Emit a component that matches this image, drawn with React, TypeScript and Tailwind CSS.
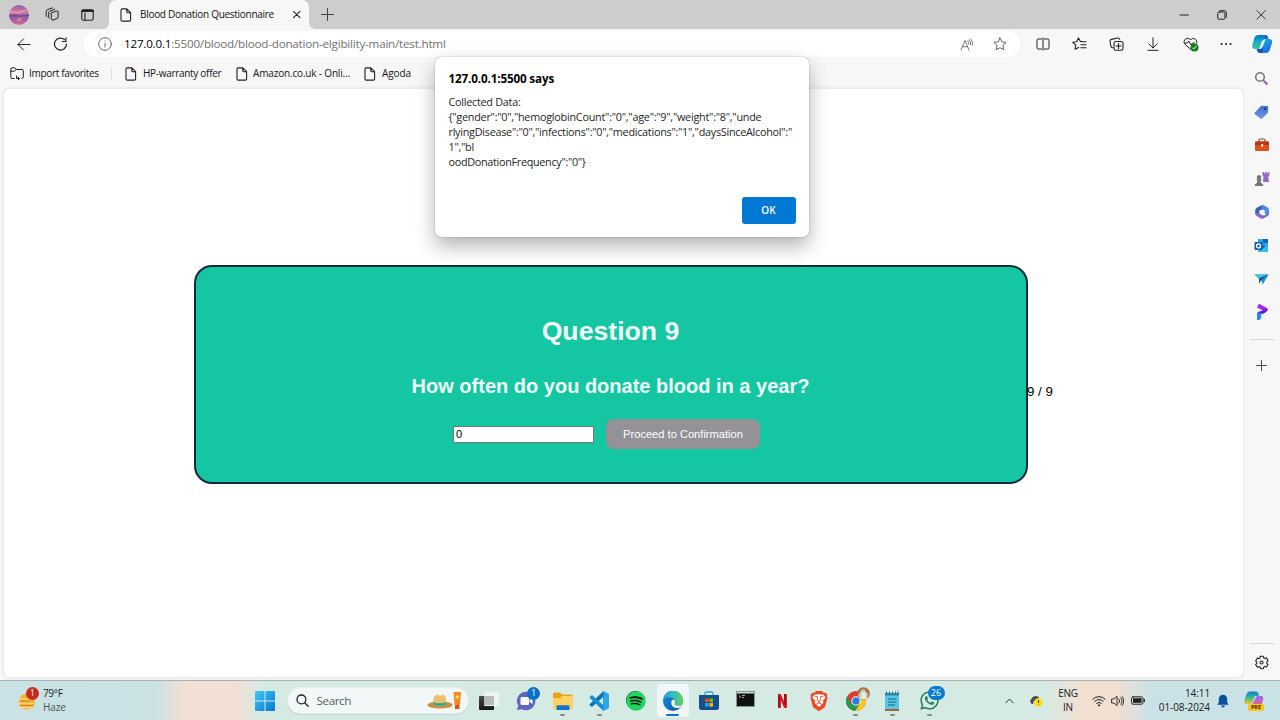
import type { ReactNode } from "react";
import { FaSpotify, FaWhatsapp } from "react-icons/fa";
import { SiBrave } from "react-icons/si";

type SvgProps = { w?: number; h?: number; vb?: string; sw?: number; className?: string; children: ReactNode };

function Line({ w = 16, h, vb, sw = 1, className = "text-[#222]", children }: SvgProps) {
  return (
    <svg width={w} height={h ?? w} viewBox={vb ?? `0 0 ${w} ${h ?? w}`} fill="none" stroke="currentColor" strokeWidth={sw} strokeLinecap="round" strokeLinejoin="round" className={`shrink-0 ${className}`}>
      {children}
    </svg>
  );
}

function Art({ w = 16, h, vb, className = "", children }: SvgProps) {
  return (
    <svg width={w} height={h ?? w} viewBox={vb ?? `0 0 ${w} ${h ?? w}`} className={`shrink-0 ${className}`}>
      {children}
    </svg>
  );
}

const FileIcon = () => (
  <Line w={12} h={14} sw={1.1}>
    <path d="M2 .9h4.8L10.6 4.700v7.200a1.200 1.200 0 0 1-1.200 1.200H2.200A1.200 1.200 0 0 1 1 11.900V2.100A1.200 1.200 0 0 1 2.200.9ZM6.800 1v2.700a1 1 0 0 0 1 1h2.700" />
  </Line>
);

function TitleBar() {
  return (
    <header className="flex h-[29px] shrink-0 items-center bg-[#cdcdcd]">
      <div className="flex w-[38px] justify-center">
        <Art w={20}>
          <defs>
            <clipPath id="av"><circle cx="10" cy="10" r="10" /></clipPath>
            <linearGradient id="avg" x1="0" y1="0" x2="0" y2="1">
              <stop offset="0" stopColor="#8d62ad" /><stop offset=".35" stopColor="#d07aa6" />
              <stop offset=".55" stopColor="#8f60a8" /><stop offset=".75" stopColor="#a55ca4" /><stop offset="1" stopColor="#d5708e" />
            </linearGradient>
          </defs>
          <g clipPath="url(#av)">
            <rect width="20" height="20" fill="url(#avg)" />
            <path d="M0 6l8 1 12-3-9 4.200L0 7.500z" fill="#efa09b" />
            <path d="M0 10.500l5-1 5 1 10-1v1.500l-8 .5H0z" fill="#6d4a95" />
            <path d="M9 13h6l-4 1.200 2 1.800H6l3-1.500z" fill="#e58391" />
          </g>
        </Art>
      </div>
      <div className="flex w-[28px] justify-center">
        <Line w={15}>
          <path d="M6.500 5.800 11.500 4a1.200 1.200 0 0 1 1.600 1v5a1.600 1.600 0 0 1-1 1.500l-4 1.600a1.200 1.200 0 0 1-1.600-1ZM4.300 11.500a1.200 1.200 0 0 1-.6-1V5.700a1.600 1.600 0 0 1 1-1.500l5-1.900M1.900 9.800a1.200 1.200 0 0 1-.7-1V4.200a1.600 1.600 0 0 1 1-1.500L7.500.9" />
        </Line>
      </div>
      <div className="flex w-[43px] justify-center">
        <Line w={13} h={12} sw={1.100}>
          <rect x=".8" y=".8" width="11.400" height="10.400" rx="1.600" />
          <path d="M.8 2.300h11.400M4 4v7" /><path d="M1.500 1.900h10.200" strokeWidth="2.400" />
        </Line>
      </div>
      <div className="flex h-full w-[200px] items-end">
        <div className="relative flex h-[29px] w-full items-center rounded-t-[7px] bg-[#f7f7f7] pl-[10.5px]">
          <svg width="6" height="6" className="absolute bottom-0 -left-[6px]"><path d="M6 0v6H0a6 6 0 0 0 6-6" fill="#f7f7f7" /></svg>
          <svg width="6" height="6" className="absolute -right-[6px] bottom-0"><path d="M0 0v6h6a6 6 0 0 1-6-6" fill="#f7f7f7" /></svg>
          <FileIcon />
          <span className="ml-[8.500px] w-[146px] text-[10px] tracking-[-0.290px] text-[#111]">Blood Donation Questionnaire</span>
          <Line w={20} h={9} sw={1.100}><path d="M7.500 1.300l6.400 6.400M13.900 1.300L7.500 7.700" /></Line>
        </div>
      </div>
      <div className="flex w-[36px] justify-center"><Line w={13} className="text-[#444]"><path d="M6.500.5v12M.5 6.500h12" /></Line></div>
      <div className="ml-auto flex">
        <div className="flex w-[38.5px] items-center justify-center"><Line w={10}><path d="M1 5h8.500" /></Line></div>
        <div className="flex w-[38.5px] items-center justify-center"><Line w={10}><rect x=".7" y="2" width="7.200" height="7.200" rx="1.500" /><path d="M2.800.7h4.700a1.800 1.800 0 0 1 1.800 1.800v4.800" /></Line></div>
        <div className="flex w-[38.5px] items-center justify-center"><Line w={10} sw={.9}><path d="M1 .7l8.300 8.300M9.300.7L1 9" /></Line></div>
      </div>
    </header>
  );
}

function ToolCell({ children }: { children: ReactNode }) {
  return <div className="flex w-[36.6px] items-center justify-center">{children}</div>;
}

const CopilotShape = () => (
  <>
    <defs>
      <linearGradient id="cp1" x1="0" y1="0" x2="0" y2="1"><stop offset="0" stopColor="#0872c7" /><stop offset=".4" stopColor="#14a5c9" /><stop offset="1" stopColor="#35c5a5" /></linearGradient>
      <linearGradient id="cp2" x1="0" y1="0" x2="1" y2="1"><stop offset="0" stopColor="#2cc4ee" /><stop offset="1" stopColor="#0c5cdb" /></linearGradient>
    </defs>
    <path d="M7 1h6c2 0 2.500 1 3 3l.7 2H12c-1.500 0-2 1-2.500 2.500L8 13c-.6 1.800-1.300 2-3 2H3C.5 15-.2 13 .5 10.500l1.700-6C3 2 4.200 1 7 1Z" fill="url(#cp1)" />
    <path d="M13 19H8c-1.800 0-2.300-1-2.800-2.500L4.600 15H7c1.500 0 2.200-1 2.700-2.500L12 7c.6-1.500 1.300-2 2.800-2H17c3 0 3.500 2 2.800 4.500l-1.900 6C17.200 18 16 19 13 19Z" fill="url(#cp2)" />
    <path d="M13 1c2 0 2.500 1 3 3l.4 1H12l-1-4Z" fill="#176bd2" />
    <path d="M5 15h3c1 0 1.600-.8 2.200-2.500L11 10v7c0 1.500-1 2-2.500 2-2 0-2.800-1-3.300-2.500Z" fill="#1451be" />
    <path d="m12 5-3.200 8.500q-.5 1.500-2 1.500h1.500q1.500 0 2.200-2L13.500 5Z" fill="#e8f8fb" />
  </>
);

function Toolbar() {
  return (
    <div className="flex h-[30px] shrink-0 items-center bg-[#f7f7f7]">
      <div className="flex w-[47px] shrink-0 justify-center"><Line w={14} h={13}><path d="M13 6.500H1M6.500 1 1 6.500 6.500 12" /></Line></div>
      <div className="flex w-[26px] shrink-0 justify-center"><Line w={15} h={14} sw={1.200}><path d="M13.500 7A6 6 0 1 1 11.400 2.500M13 .8v3.700H9.300" /></Line></div>
      <div className="ml-[10px] flex h-[26px] w-[937.500px] shrink-0 items-center rounded-full bg-white pl-[15px] shadow-[0_0_1px_rgba(0,0,0,0.12)]">
        <Line w={14} className="text-[#666]"><circle cx="7" cy="7" r="6.300" /><path d="M7 6.300V10M7 4v.2" /></Line>
        <span className="ml-[12px] text-[11.67px] tracking-[-0.220px] whitespace-nowrap text-[#707070]"><span className="text-black">127.0.0.1</span>:5500/blood/blood-donation-elgibility-main/test.html</span>
        <div className="ml-auto flex items-center gap-[19px] pr-[14px]">
          <Line w={14} h={13} className="text-[#666]" sw={.9}><path d="M1 12 5 2.500 9 12M2.400 8.700h5.200M7.500 2.800a3 3 0 0 1 1.200 3.300M9 1.900a4.500 4.500 0 0 1 1.600 4.800M10.700 1a6 6 0 0 1 1.800 6" /></Line>
          <Line w={14} className="text-[#555]" sw={.9}><path d="m7 .9 1.900 3.900 4.200.6L10 8.400l.8 4.300L7 10.700l-3.800 2 .8-4.300L.9 5.400l4.200-.6Z" /></Line>
        </div>
      </div>
      <div className="ml-[4.500px] flex shrink-0">
        <ToolCell><Line w={14} h={14}><path d="M5.500 2H2.200A1.200 1.200 0 0 0 1 3.200v7.600A1.200 1.200 0 0 0 2.200 12h3.300M8.500 2h3.300A1.200 1.200 0 0 1 13 3.200v7.600a1.200 1.200 0 0 1-1.200 1.200H8.500M7 .8v12.400" /></Line></ToolCell>
        <ToolCell><Line w={15} h={14} sw={1.100}><path d="M10 4.500H8.400L6.500.9 4.700 4.700.8 5.300l3 2.900-.7 4.100 3.600-1.900M9.500 4.800h4.600M8.800 7.800h5.300M8.800 10.800h5.300" /></Line></ToolCell>
        <ToolCell><Line w={15} h={14} sw={1.100}><rect x="5" y="4.500" width="9" height="8.800" rx="1.800" /><path d="M9.500 6.500v5M7 9h5M3.800 10.700A2 2 0 0 1 2 9.500L1 4.700a2 2 0 0 1 1.500-2.300L8.500 1a2 2 0 0 1 2.200 1.300" /></Line></ToolCell>
        <ToolCell><Line w={12} h={14}><path d="M6 .8v10M1.800 6.800 6 11l4.200-4.200M1 13.300h10" /></Line></ToolCell>
        <ToolCell>
          <Line w={16} h={15} className="ml-[2px] text-[#222]">
            <path d="M8 12.500 1.500 6.800A3.600 3.600 0 0 1 6.500 1.900L7.500 3l1-1A3.600 3.600 0 0 1 13.800 6M1.500 6h3l1.300-2L8 8l1.500-2h2" />
            <circle cx="11.500" cy="10.500" r="4" fill="#108016" stroke="none" /><path d="m9.700 11 1 1 2.600-3" stroke="white" />
          </Line>
        </ToolCell>
        <ToolCell><Line w={12} h={4} sw={2}><path d="M1.500 2h.1M6 2h.1M10.500 2h.1" /></Line></ToolCell>
      </div>
      <div className="mr-px ml-auto flex w-[34px] shrink-0 justify-center"><Art w={20}><CopilotShape /></Art></div>
    </div>
  );
}

function Favorites() {
  return (
    <div className="flex h-[29px] items-center bg-[#f7f7f7] pl-[10px] text-[10px] whitespace-nowrap text-[#151515]">
      <Line w={15} h={13}><path d="M4 11.500H2A1.200 1.200 0 0 1 .8 10.300V2A1.200 1.200 0 0 1 2 .8h2.800L6.500 2.500H12A1.300 1.300 0 0 1 13.300 3.800v6.400A1.300 1.300 0 0 1 12 11.500M.8 4.200h3.500L6.300 2.500M6.500 9v2.500H9.500M8 10l1.500 1.500L8 13" /></Line>
      <span className="ml-[4px] w-[70px] tracking-[-0.320px]">Import favorites</span>
      <div className="ml-[12px] h-[13px] w-px bg-[#dedede]" />
      <div className="ml-[13px] flex items-center gap-[6px]"><FileIcon /><span className="w-[93px] tracking-[-0.300px]">HP-warranty offer</span></div>
      <div className="flex items-center gap-[5px]"><FileIcon /><span className="w-[111px] tracking-[-0.170px]">Amazon.co.uk - Onli...</span></div>
      <div className="flex items-center gap-[6px]"><FileIcon /><span className="tracking-[-0.100px]">Agoda</span></div>
    </div>
  );
}

function Question() {
  return (
    <main className="flex h-[590px] w-[1241px] rounded-[7px] border border-[#ececec] bg-white pt-[176px] pl-[190px] font-['Liberation_Sans',Arial,sans-serif] shadow-[0_0_3px_rgba(0,0,0,0.1)]">
      <section className="flex h-[219px] w-[834px] shrink-0 flex-col items-center rounded-[18px] border-2 border-[#0c2940] bg-[#14c6a2] text-[#eefcf8]">
        <h1 className="mt-[49px] mr-px text-[26.67px] leading-[31px] font-bold">Question 9</h1>
        <h2 className="mt-[28px] mr-px text-[20px] leading-[23px] font-bold">How often do you donate blood in a year?</h2>
        <div className="mt-[21px] mr-[9px] flex items-center gap-[12px]">
          <input defaultValue="0" className="h-[17px] w-[141px] border border-[#767676] bg-white px-[2px] text-[11.11px] text-black outline-none" />
          <button className="h-[30px] w-[154px] rounded-[8px] bg-[#949296] text-[11.11px] text-white">Proceed to Confirmation</button>
        </div>
      </section>
      <span className="mt-[119px] -ml-px text-[13.33px] leading-[16px] text-black">9 / 9</span>
    </main>
  );
}

function SideCell({ children }: { children: ReactNode }) {
  return <div className="flex h-[33.36px] items-center justify-center">{children}</div>;
}

function Sidebar() {
  return (
    <aside className="flex h-[621px] w-[35px] flex-col bg-[#f7f7f7] pt-[3px]">
      <SideCell><Art w={15}><circle cx="6" cy="6" r="4.300" fill="#f4f4f4" stroke="#77777b" strokeWidth="1.600" /><path d="m9.300 9.300 1.500 1.500" stroke="#77777b" strokeWidth="1.800" /><path d="m10.500 10.500 3 3" stroke="#9a61ca" strokeWidth="2.300" /></Art></SideCell>
      <SideCell><Art w={15}><defs><linearGradient id="tag" x1="0" y1="0" x2="0" y2="1"><stop stopColor="#3e6ec6" /><stop offset="1" stopColor="#6c9af0" /></linearGradient></defs><path d="M8 .8 13 1c1 0 1.200.4 1.200 1.300L14 7c0 .8-.2 1-.8 1.600l-5 5c-.6.5-1.200.5-1.800 0L.9 9.300c-.6-.6-.6-1.200 0-1.800l5.600-6C7 1 7.300.8 8 .8Z" fill="url(#tag)" /><circle cx="11" cy="4" r="1.200" fill="#173d88" /></Art></SideCell>
      <SideCell><Art w={16} h={14}><path d="M5 4V2.300C5 1.500 5.400 1 6.200 1h3.600c.8 0 1.200.5 1.200 1.300V4" fill="none" stroke="#934324" strokeWidth="1.200" /><rect x="1" y="3.500" width="14" height="9.500" rx="1.300" fill="#df4e1c" /><path d="M1 7V4.800Q1 3.500 2.300 3.500h11.400Q15 3.500 15 4.800V7Z" fill="#b4391b" /><rect x="7" y="6" width="2.200" height="3" rx=".5" fill="#ffd4b0" /></Art></SideCell>
      <SideCell><Art w={16}><path d="M8.500 1h1.700v1.500h1V1h1.700v1.500h1V1h1.500v3.500L14.200 5.700l.8 5.300h-6l.5-5.300-1-1.200Z" fill="#9667c4" /><path d="M5 4a2.300 2.300 0 0 1 1.500 4h.8v1.400h-.8l.7 2.600 2 1.500V15H.8v-1.500l2-1.500.7-2.600h-.8V8h.8A2.300 2.300 0 0 1 5 4Z" fill="#77777b" /></Art></SideCell>
      <SideCell><Art w={16}><defs><linearGradient id="ms" x1="0" y1="1" x2="1" y2="0"><stop stopColor="#b070df" /><stop offset=".5" stopColor="#7966d7" /><stop offset="1" stopColor="#3472bc" /></linearGradient></defs><path d="M9 .8 3 3.500Q1.200 4.500 1.200 6.500V10L5.300 9.500V6.800L9.500 5Z" fill="#3c63b4" /><path d="m8.500.8 5 2.500q1.500 1 1.500 3V10l-1 1-3.300-1.500V6.500L7.500 5Z" fill="#4b8fe0" /><path d="M1.200 9q0 2 1.500 3l4 2.500q1.300.8 2.600 0l4.200-2.500q1.500-1 1.500-3l-5 2.500q-2 .5-4.700-2.200Z" fill="url(#ms)" /><circle cx="8" cy="8" r="2.300" fill="#f7f7f7" /></Art></SideCell>
      <SideCell><Art w={15}><rect x="4" y="1" width="10" height="11" fill="#28a9ea" /><path d="M9 1h5v4H9zM9 7l5 3v4H4Z" fill="#0d65b8" /><path d="M4 13.500 14 7v7H5Z" fill="#35bded" /><rect x=".5" y="4" width="8" height="8" rx="1" fill="#0c5eaa" /><circle cx="4.500" cy="8" r="2" fill="none" stroke="white" strokeWidth="1.300" /></Art></SideCell>
      <SideCell><Art w={15} h={14}><path d="M.5 2.500h14L8.800 12.500 7 8Z" fill="#2794e2" /><path d="M.5 2.500h14L5 7Z" fill="#3dc1e7" /><path d="m5 6.300 9.500-3.800L6.800 8.500 5 12Z" fill="#125694" /></Art></SideCell>
      <SideCell><Art w={14} h={18}><path d="M4 .8 12 5q1.300 1 .3 2.500L9 8 2 4.500Z" fill="#a42ae6" /><path d="M12.500 5.500q.5 1.500-1 3T7.500 11H2l1-2 7-2.500Z" fill="#5f1ddc" /><path d="M2 10h4.200v5L4.500 17H2Z" fill="#268ce9" /></Art></SideCell>
      <div className="mx-auto mt-[10px] h-px w-[24px] bg-[#d8d8d8]" />
      <div className="mt-[19px] flex justify-center"><Line w={13} className="text-[#444]"><path d="M6.500 1.500v10M1.500 6.500h10" /></Line></div>
      <div className="mx-auto mt-auto h-px w-[24px] bg-[#d8d8d8]" />
      <div className="mt-[11px] mb-[10.500px] flex justify-center"><Line w={15} vb="0 0 24 24" sw={1.700}><circle cx="12" cy="12" r="2.500" /><path d="m9.500 2 .6 2.600a7 7 0 0 0-2 1.200L5.500 5l-3 4.500 2 2a7 7 0 0 0 .1 2L2.500 15l3 4.500 2.700-.9 2 1.100.5 2.300h4l.7-2.500 1.900-1 2.500.8 2.500-4.300-1.900-2 .1-2 2-2-2.600-4.400-2.700.8-1.800-1-.7-2.400Z" /></Line></div>
    </aside>
  );
}

function Alert() {
  return (
    <div role="alertdialog" className="absolute top-[57px] left-[435px] flex h-[180px] w-[374px] flex-col rounded-[7px] bg-white px-[13.500px] pt-[13px] pb-[13.500px] text-black shadow-[0_9px_20px_rgba(0,0,0,0.3),0_0_2px_rgba(0,0,0,0.25)]">
      <h3 className="text-[11.67px] leading-[17px] font-bold tracking-[-0.140px]">127.0.0.1:5500 says</h3>
      <div className="mt-[7px] text-[10.83px] leading-[15px] whitespace-nowrap text-[#252525]">
        <p className="tracking-[-0.270px]">Collected Data:</p>
        <p className="tracking-[-0.250px]">{'{"gender":"0","hemoglobinCount":"0","age":"9","weight":"8","unde'}</p>
        <p className="tracking-[-0.270px]">{'rlyingDisease":"0","infections":"0","medications":"1","daysSinceAlcohol":"'}</p>
        <p className="tracking-[-0.250px]">{'1","bl'}</p>
        <p className="tracking-[-0.310px]">{'oodDonationFrequency":"0"}'}</p>
      </div>
      <button className="mt-auto h-[26.500px] w-[54px] self-end rounded-[3px] bg-[#0078d4] text-[10px] font-semibold text-white">OK</button>
    </div>
  );
}

function TaskApp({ children, run = false, active = false }: { children: ReactNode; run?: boolean; active?: boolean }) {
  return (
    <div className="flex h-[39px] w-[36.65px] items-center justify-center">
      <div className={`relative flex h-[33px] w-[32px] items-center justify-center rounded-[4px] ${active ? "bg-[#f0f7f6]" : ""}`}>
        {children}
        {run && <div className="absolute bottom-[1px] h-[2.5px] w-[5px] rounded-full bg-[#858b8b]" />}
        {active && <div className="absolute bottom-[1px] h-[2.5px] w-[13px] rounded-full bg-[#0874c9]" />}
      </div>
    </div>
  );
}

function Taskbar() {
  return (
    <footer className="flex h-[40px] shrink-0 items-center border-t border-[#a9b2b3] bg-[linear-gradient(90deg,#c9e2e6_0,#cbe2e5_155px,#f3dfd3_185px,#f3dfd3_235px,#d6eae4_262px,#d6eae4_1045px,#f3dfd0_1085px,#f3dfd0_1115px,#cae2e6_1150px,#c9e2e6_1280px)]">
      <div className="flex w-[252px] items-center pl-[17px]">
        <div className="relative">
          <Art w={20} h={22}><circle cx="10" cy="11.500" r="8" fill="#f4b12a" /><path d="M2 9h12M1 13.500h15M4 17.500h12" stroke="#ffd783" strokeWidth="1.600" strokeLinecap="round" /><path d="M4 10.800h8M3 15.500h13" stroke="#d98420" strokeLinecap="round" /></Art>
          <span className="absolute -top-[3px] left-[9px] flex size-[13px] items-center justify-center rounded-full bg-[#c42b1c] text-[8.500px] text-white">1</span>
        </div>
        <div className="ml-[6px] text-[10px] leading-[13.500px] tracking-[-0.350px] text-[#222]"><p>79°F</p><p className="tracking-[-0.100px] text-[#4b5657]">Haze</p></div>
      </div>
      <div className="flex w-[26px] justify-center">
        <Art w={20}><defs><linearGradient id="win" x1="0" y1="0" x2="1" y2="1"><stop stopColor="#43c9f8" /><stop offset="1" stopColor="#0675d1" /></linearGradient></defs><path d="M0 1q0-1 1-1h8.500v9.500H0ZM10.500 0H19q1 0 1 1v8.500h-9.500ZM0 10.500h9.500V20H1q-1 0-1-1ZM10.500 10.500H20V19q0 1-1 1h-8.500Z" fill="url(#win)" /></Art>
      </div>
      <div className="ml-[8.500px] flex h-[27px] w-[182px] items-center rounded-full border border-[#e3eeee] bg-[#f1f8f7] pl-[8px] shadow-[0_1px_1px_rgba(0,0,0,0.08)]">
        <Line w={13} sw={1.300}><circle cx="5.400" cy="5.400" r="4.400" /><path d="m8.700 8.700 3.500 3.500" /></Line>
        <span className="ml-[8px] text-[11.67px] tracking-[-0.400px] text-[#555f60]">Search</span>
        <Art w={36} h={20} className="mr-[5px] ml-auto">
          <ellipse cx="13" cy="14" rx="12.500" ry="3.500" fill="#c88d35" /><path d="M5.500 14 7 6q3-4 6-1 4-3 5.500 1L20 14q-7 3-14.500 0" fill="#edbf70" /><path d="m5.800 11 .5 3q6.500 2.500 13.500 0l-.5-3q-7 2.500-13.500 0" fill="#43a58b" />
          <path d="M26.500 1h7.500l-1 13h-5.500Z" fill="#f78a20" /><path d="M28 14h4.500v4H28z" fill="#d9521d" /><circle cx="30.200" cy="6" r="1.800" fill="#ffe26a" />
        </Art>
      </div>
      <nav className="ml-[2.500px] flex">
        <TaskApp><Art w={20} h={20}><defs><linearGradient id="tv" x1="0" y1="0" x2="0" y2="1"><stop stopColor="#4a4a4a" /><stop offset="1" stopColor="#161616" /></linearGradient></defs><rect y="5" width="15" height="14" rx="1" fill="url(#tv)" /><rect x="5" y="1" width="15" height="14" rx="1" fill="#f0f3f2" /><path d="M5 5h10v9H5z" fill="#b6bcbc" /></Art></TaskApp>
        <TaskApp><div className="relative"><Art w={20} h={20}><path d="M10 .8A9.200 9.200 0 1 1 6 18.200L.7 19l1.600-4.200A9.200 9.200 0 0 1 10 .8Z" fill="#6264bd" /><rect x="4.500" y="6" width="8.500" height="8" rx="1.500" fill="white" /><path d="m13.500 9 3-2v6l-3-2Z" fill="white" /></Art><span className="absolute -top-[4px] left-[11px] flex size-[13px] items-center justify-center rounded-full bg-[#0870c5] text-[9px] text-white">1</span></div></TaskApp>
        <TaskApp run><Art w={20} h={18}><path d="M0 2Q0 .5 1.500.5h5.200L9 2.500h9Q20 2.500 20 4v13H0Z" fill="#e8a511" /><path d="M0 6h7l2-2h9.500Q20 4 20 5.500V16q0 1.500-1.500 1.500h-17Q0 17.500 0 16Z" fill="#ffd363" /><path d="M3.500 18v-3.500q0-1.300 1.300-1.300h10.400q1.300 0 1.300 1.300V18Z" fill="#0f75ca" /></Art></TaskApp>
        <TaskApp run><Art w={20}><path d="m14 0 5 2.300q1 .5 1 1.500v12.400q0 1-1 1.500L14 20Z" fill="#2ca7ec" /><path d="M14.500.2v5.500L3.500 15.500q-.6.500-1.200 0l-1.500-1.300q-.5-.5 0-1.200L14 .5Z" fill="#0873b9" /><path d="M14.500 19.800v-5.500L3.500 4.500q-.6-.5-1.200 0L.8 5.800q-.5.500 0 1.200L14 19.500Z" fill="#168ed7" /></Art></TaskApp>
        <TaskApp><div className="flex size-[19px] items-center justify-center rounded-full bg-[#101810]"><FaSpotify size={20} className="shrink-0 text-[#1ed75f]" /></div></TaskApp>
        <TaskApp active><Art w={20}><defs><linearGradient id="ed1" x1="0" y1="0" x2="1" y2="0"><stop stopColor="#249bdd" /><stop offset=".5" stopColor="#36bcc6" /><stop offset="1" stopColor="#67d34d" /></linearGradient><linearGradient id="ed2" x1="0" y1="0" x2="1" y2="1"><stop stopColor="#168ee0" /><stop offset="1" stopColor="#0c54a2" /></linearGradient></defs><circle cx="10" cy="10" r="10" fill="url(#ed2)" /><path d="M0 9A10 10 0 0 1 20 10c0 3-2 5-5 5-2.500 0-4-1-3.500-2 1.300-1.500 1-4-1-5.300C7 5.500 2 5.500 0 9Z" fill="url(#ed1)" /><path d="M9 9c-2 3 0 8 5 8 2 0 4-.6 6-2.500V13c-2 2-4 2-6 1.800-2.500-.4-3-1.300-2.500-2 .8-1.300.8-2.800-.3-4Z" fill="#eff7f6" /></Art></TaskApp>
        <TaskApp><Art w={20}><path d="M6 5V2.300Q6 1 7.300 1h5.400Q14 1 14 2.300V5" fill="none" stroke="#2ba9e4" strokeWidth="1.300" /><path d="M0 4h20v12.500Q20 19 17.500 19h-15Q0 19 0 16.500Z" fill="#154d8d" /><path d="M6 7.500h3.600v3.600H6z" fill="#f25022" /><path d="M10.400 7.500H14v3.600h-3.600z" fill="#7fba00" /><path d="M6 12h3.600v3.600H6z" fill="#19a7e8" /><path d="M10.400 12H14v3.600h-3.600z" fill="#ffb900" /></Art></TaskApp>
        <TaskApp><Art w={19} h={17} className="mb-[2px]"><path d="M.5.5h18v15H.5z" fill="#111" stroke="#8b9292" /><path d="M1 1h17v1.500H1z" fill="#d2d5d5" /><path d="m3 4.500 1.500 1L3 6.500M6 4.500h3M6 6.500h2" stroke="#ccc" fill="none" strokeWidth=".8" /></Art></TaskApp>
        <TaskApp><Art w={9} h={14}><path d="M0 0h2.800v14L0 13.700ZM6 0h2.800v14L6 13.600Z" fill="#a90d16" /><path d="M0 0h2.800l6 14-2.800-.5Z" fill="#e50e1b" /></Art></TaskApp>
        <TaskApp><div className="relative flex items-center justify-center"><div className="absolute h-[14px] w-[10px] rounded-full bg-white" /><SiBrave size={20} className="relative text-[#f04623]" /></div></TaskApp>
        <TaskApp run>
          <div className="relative"><Art w={20}><circle cx="10" cy="10" r="10" fill="#e7382b" /><path d="M1.300 5A10 10 0 0 0 9 20l5-7-9-.5Z" fill="#27994c" /><path d="M9 20A10 10 0 0 0 19.500 7H10l4 6Z" fill="#fcc71e" /><circle cx="10" cy="10" r="4.700" fill="white" /><circle cx="10" cy="10" r="3.700" fill="#287ae7" /></Art>
            <Art w={13} className="absolute -top-[4px] left-[11px]"><circle cx="6.500" cy="6.500" r="6.300" fill="#b56c3c" /><path d="M1 9 4 3l3-1 4 5-1 5-5 .5Z" fill="#a9d4c4" /><path d="M5 5h3l2 7H3Z" fill="#f5ead8" /></Art></div>
        </TaskApp>
        <TaskApp run><Art w={16} h={20}><path d="M1 2.500h14v16H1z" fill="#5ac8e4" /><path d="M1 18h14v2H1z" fill="#a0643a" /><path d="M1 2h14v2.500H1z" fill="#258db1" /><path d="M2.500.5v3M5.500.5v3M8.500.5v3M11.500.5v3M14 .5v3" stroke="#3c6d7b" /><path d="M4 8h8.500M4 11h8.500M4 14h7" stroke="#146584" strokeWidth="1.200" /></Art></TaskApp>
        <TaskApp run><div className="relative"><FaWhatsapp size={21} className="text-[#218357]" /><span className="absolute -top-[4px] left-[9px] flex h-[14px] w-[17px] items-center justify-center rounded-full bg-[#087ad0] text-[9px] text-white">26</span></div></TaskApp>
      </nav>
      <div className="ml-auto flex items-center text-[10px] text-[#202020]">
        <Line w={9} h={6} className="mr-[14.500px] text-[#333]"><path d="M.8 4.800 4.500 1l3.700 3.800" /></Line>
        <Art w={14} h={13}><path d="M3 10a3 3 0 0 1-.5-5.200A4.500 4.500 0 0 1 10.500 4Q6 5 4.500 10Z" fill="#4b4f50" /><path d="M4 10q0-4 4.500-5L12 6v4Z" fill="#c5c9c9" /><circle cx="9.500" cy="8.500" r="4.200" fill="#ffe100" /><path d="M9.500 6v3M9.500 10.500v.5" stroke="#333" strokeWidth="1" /></Art>
        <div className="ml-[14.500px] w-[22px] text-center leading-[13.500px] tracking-[-0.250px]"><p>ENG</p><p>IN</p></div>
        <Line w={14} h={12} className="ml-[13px]"><path d="M1 4a8.500 8.500 0 0 1 12 0M2.800 6.200a6 6 0 0 1 8.400 0M4.600 8.400a3.400 3.400 0 0 1 4.800 0" /><circle cx="7" cy="10.300" r=".6" fill="currentColor" /></Line>
        <Line w={13} h={12} className="ml-[5px]" sw={.9}><path d="M1 4h2l3-2.700v9.400L3 8H1ZM8 4a3 3 0 0 1 0 4M9.700 2.700a5 5 0 0 1 0 6.600M11.200 1.500a7 7 0 0 1 0 9" /></Line>
        <Line w={14} h={9} className="ml-[7px]"><rect x=".6" y=".8" width="11.400" height="7.400" rx="1.500" /><path d="M2 2.200h8.600v4.600H2z" fill="currentColor" stroke="none" /><path d="M13.300 3.500v2" strokeWidth="1.300" /></Line>
        <div className="ml-[13px] w-[52px] text-right leading-[13.500px] tracking-[-0.100px] whitespace-nowrap"><p>14:11</p><p>01-08-2024</p></div>
        <Art w={12} h={14} className="ml-[7px]"><path d="M6 .8A4.200 4.200 0 0 1 10.200 5v3.500l1.500 2.300H.3L1.800 8.500V5A4.200 4.200 0 0 1 6 .8ZM4 11.500h4Q7.500 13.500 6 13.500T4 11.500Z" fill="#07509c" /></Art>
        <div className="relative mr-[16px] ml-[15px]">
          <Art w={20} h={20}><defs><linearGradient id="co" x1="0" y1="0" x2="0" y2="1"><stop stopColor="#137bd5" /><stop offset=".5" stopColor="#38bd8b" /><stop offset="1" stopColor="#f6c335" /></linearGradient><linearGradient id="co2" x1="0" y1="0" x2="0" y2="1"><stop stopColor="#9969e9" /><stop offset="1" stopColor="#f65f86" /></linearGradient></defs><path d="M6 .5h6q2 0 2.700 2.500L15 5h-3q-1.500 0-2 2l-2 6H2q-2.500 0-1.500-4L2.500 3Q3.300.5 6 .5Z" fill="url(#co)" /><path d="m7 16 4.500-9q.8-2 2.500-2h3q3 0 2 4l-1.500 5q-.7 2-3 2Z" fill="url(#co2)" /></Art>
          <span className="absolute top-[13px] left-[4px] flex h-[7px] w-[16px] items-center justify-center rounded-[2px] bg-[#ffc21a] text-[5.500px] font-bold text-[#342500]">PRE</span>
        </div>
      </div>
    </footer>
  );
}

export default function App() {
  return (
    <div className="relative flex h-[720px] w-[1280px] flex-col overflow-hidden bg-[#f7f7f7] font-['Open_Sans','Noto_Sans',sans-serif]">
      <TitleBar />
      <Toolbar />
      <div className="flex h-[621px] shrink-0 bg-[#f7f7f7]">
        <div className="flex w-[1244px] shrink-0 flex-col">
          <Favorites />
          <div className="pl-[3px]"><Question /></div>
        </div>
        <Sidebar />
      </div>
      <Taskbar />
      <Alert />
    </div>
  );
}
